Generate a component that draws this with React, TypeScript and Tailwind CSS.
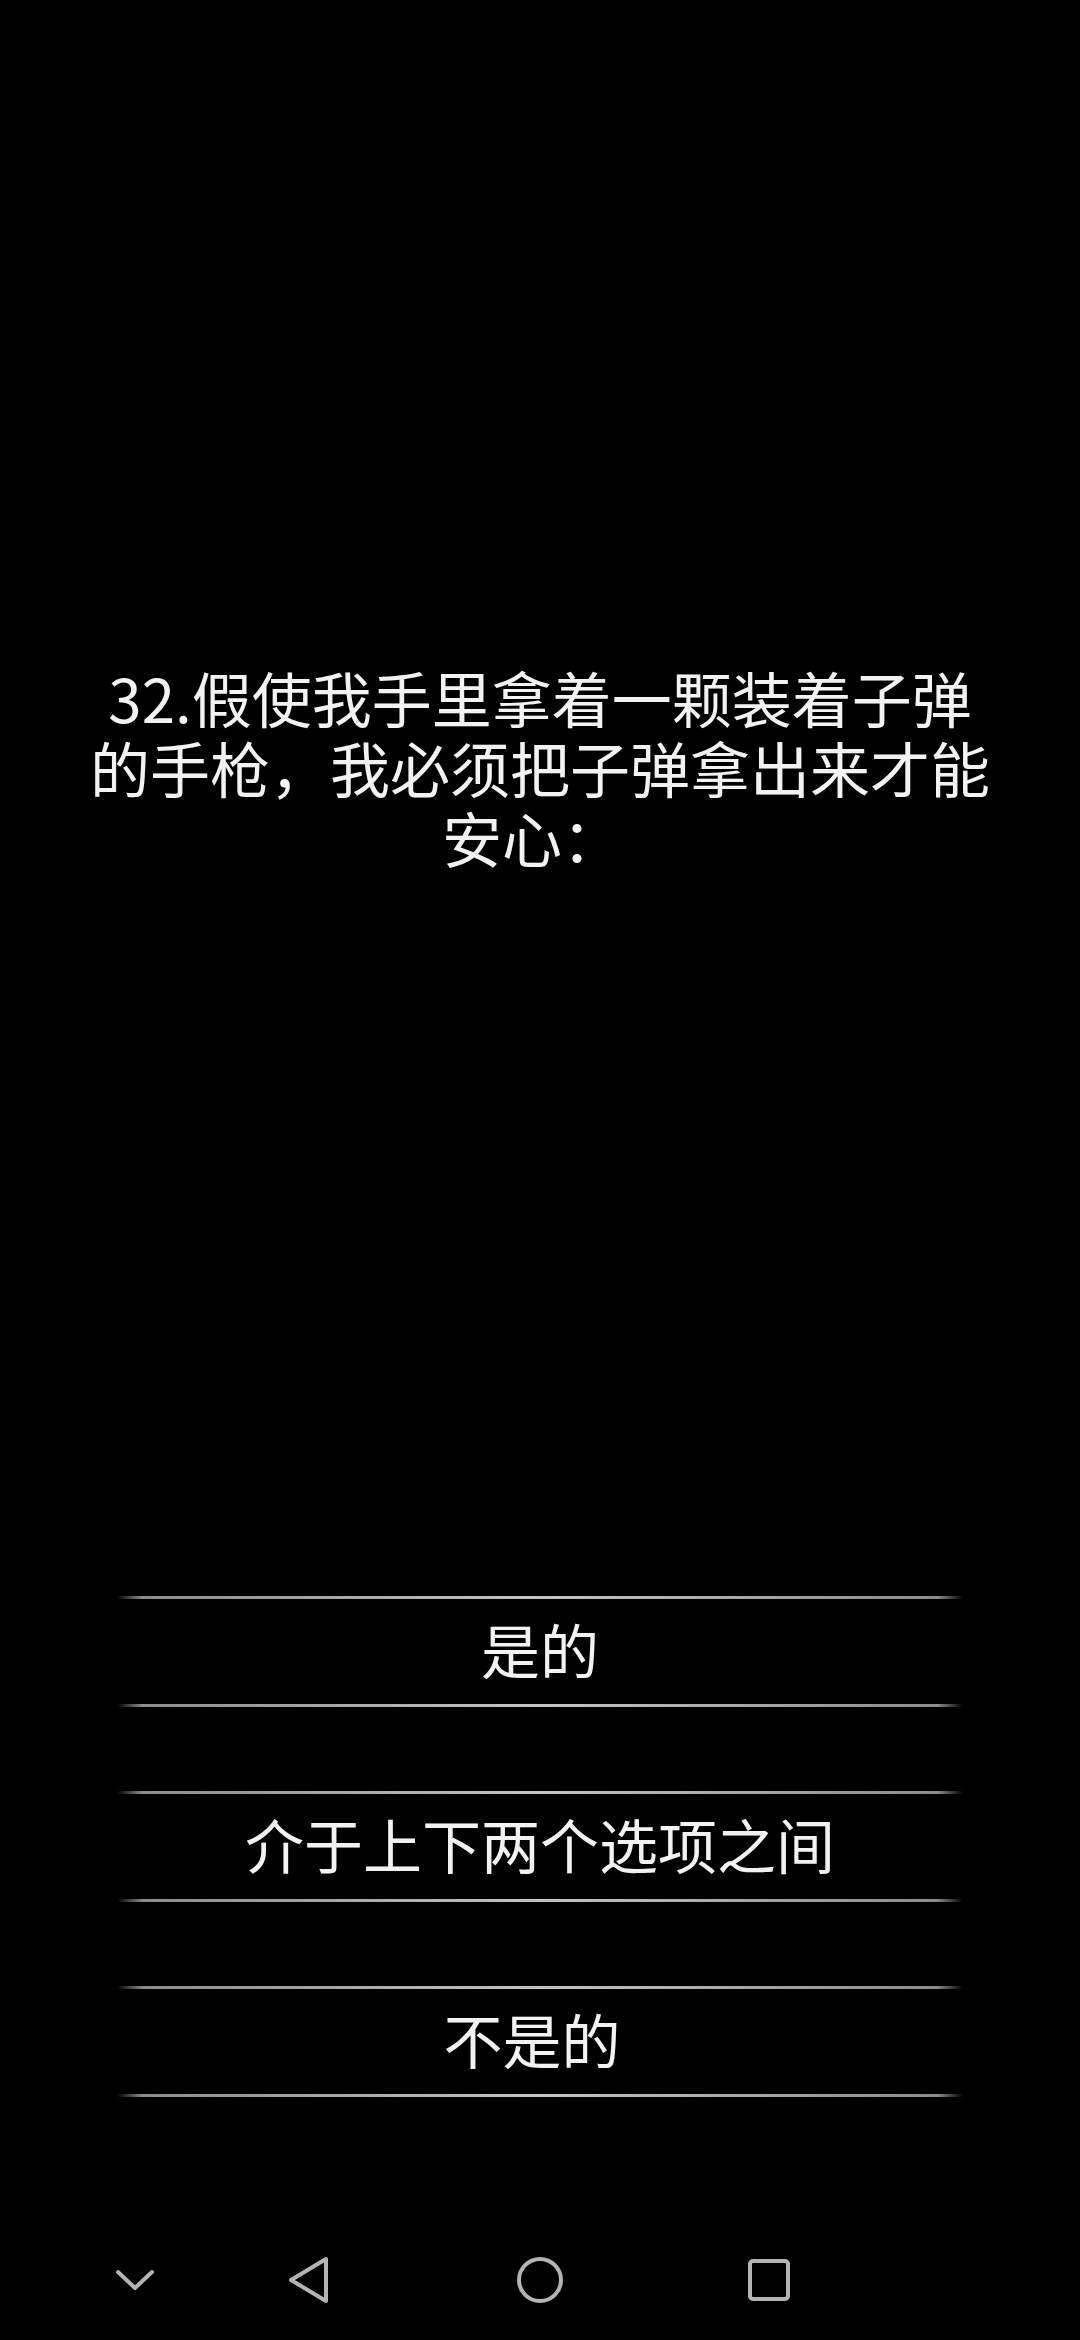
import React from "react";

const options = [
  { label: "是的", shift: "" },
  { label: "介于上下两个选项之间", shift: "" },
  { label: "不是的", shift: "pr-[16px]" },
];

function Line() {
  return (
    <div className="mx-auto h-[3px] w-[846px] bg-[linear-gradient(90deg,transparent,#8c8c8c_3%,#c4c4c4_50%,#8c8c8c_97%,transparent)]" />
  );
}

function NavBar() {
  return (
    <div className="relative h-[120px] w-full">
      <svg className="absolute left-[114px] top-[48px]" width="42" height="24" viewBox="0 0 42 24" fill="none">
        <path d="M4 4 L21 20 L38 4" stroke="#b4b4b4" strokeWidth="4" strokeLinecap="round" strokeLinejoin="round" />
      </svg>
      <svg className="absolute left-[285px] top-[34px]" width="48" height="52" viewBox="0 0 48 52" fill="none">
        <path d="M41 5 L41 47 L6 26 Z" stroke="#b4b4b4" strokeWidth="4" strokeLinejoin="round" />
      </svg>
      <div className="absolute left-[517px] top-[37px] h-[46px] w-[46px] rounded-full border-[4px] border-[#b4b4b4]" />
      <div className="absolute left-[748px] top-[39px] h-[42px] w-[42px] rounded-[5px] border-[4px] border-[#b4b4b4]" />
    </div>
  );
}

export default function App() {
  return (
    <div className="flex h-[2340px] w-[1080px] flex-col bg-black text-white [font-family:'Noto_Sans_CJK_SC','Noto_Sans',sans-serif]">
      <div className="flex flex-col items-center pt-[662px] text-[60px] leading-[70px] text-[#f2f2f2]">
        <p>32.假使我手里拿着一颗装着子弹</p>
        <p>的手枪，我必须把子弹拿出来才能</p>
        <p className="pr-[16px]">安心：</p>
      </div>

      <div className="mt-auto flex flex-col gap-[84px]">
        {options.map((o) => (
          <div key={o.label} className="flex flex-col">
            <Line />
            <div className={`flex h-[105px] items-center justify-center pb-[6px] text-[59px] leading-none text-[#f2f2f2] ${o.shift}`}>
              {o.label}
            </div>
            <Line />
          </div>
        ))}
      </div>

      <div className="mt-[123px]">
        <NavBar />
      </div>
    </div>
  );
}
